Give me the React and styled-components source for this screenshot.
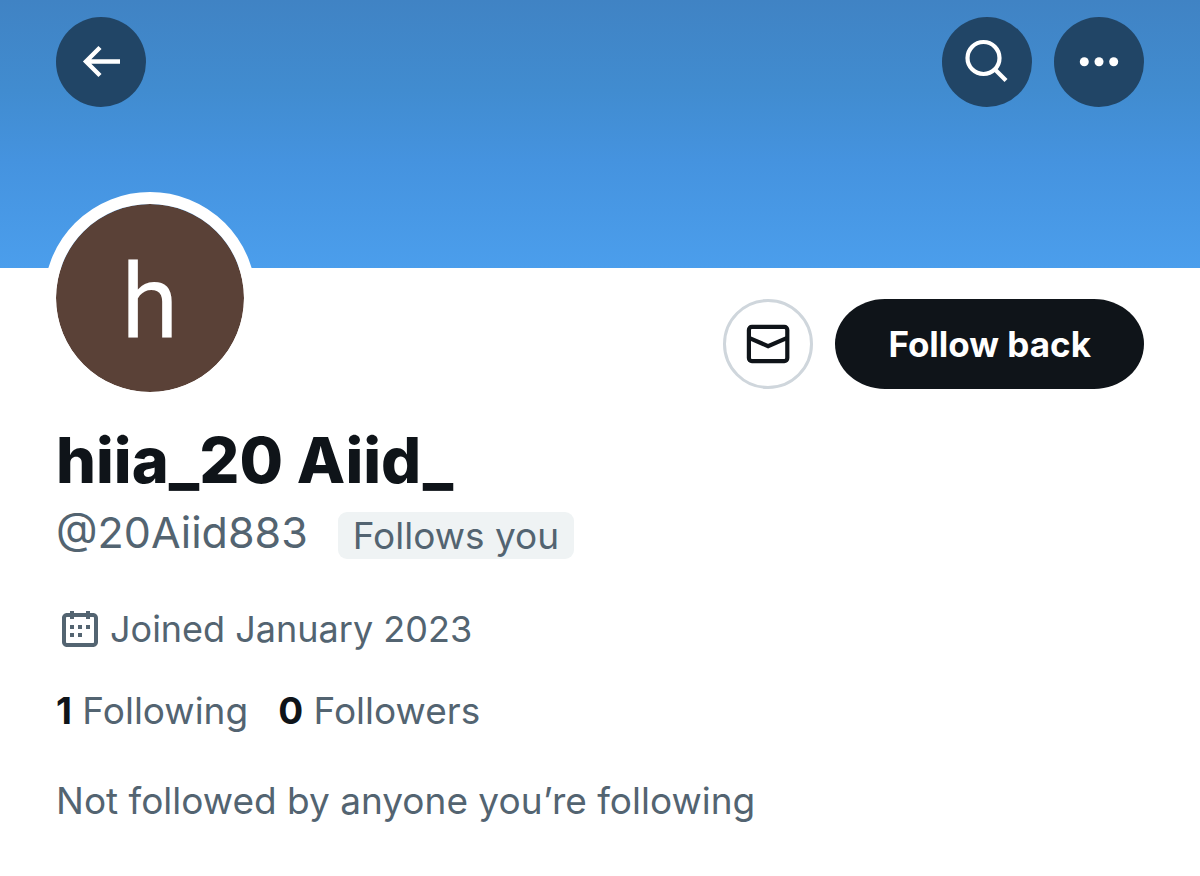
import React from 'react'
import styled, { createGlobalStyle } from 'styled-components'

const GlobalStyle = createGlobalStyle`
* {
box-sizing: border-box;
}
body {
margin: 0;
background: #ffffff;
color: #0f1419;
font-family: Inter, 'Liberation Sans', sans-serif;
}
`

const Banner = styled.header`
display: flex;
align-items: flex-start;
gap: 22px;
height: 268px;
padding: 17px 56px;
background: linear-gradient(180deg, #4083c4 0%, #418cd0 34%, #4593df 60%, #4b9eec 100%);
`

const CircleButton = styled.button`
display: flex;
align-items: center;
justify-content: center;
flex-shrink: 0;
width: 90px;
height: 90px;
padding: 0;
border: ${(props) => (props.$outlined ? '3px solid #cfd6dc' : 'none')};
border-radius: 50%;
background: ${(props) => (props.$outlined ? '#ffffff' : '#214566')};
color: ${(props) => (props.$outlined ? '#0f1419' : '#ffffff')};
cursor: pointer;
`

const BackButton = styled(CircleButton)`
margin-right: auto;
`

const Profile = styled.main`
padding: 0 56px 51px;
`

const TopRow = styled.div`
display: flex;
align-items: flex-start;
justify-content: space-between;
`

const Avatar = styled.div`
display: flex;
align-items: center;
justify-content: center;
width: 212px;
height: 212px;
margin: -76px 0 0 -12px;
padding-top: 10px;
border: 12px solid #ffffff;
border-radius: 50%;
background: #5a4137;
background-clip: padding-box;
color: #ffffff;
font-family: Roboto, sans-serif;
font-size: 104px;
line-height: 104px;
`

const Actions = styled.div`
display: flex;
gap: 22px;
padding-top: 31px;
`

const FollowButton = styled.button`
height: 90px;
padding: 0 53px;
border: none;
border-radius: 50px / 45px;
background: #0f1419;
color: #ffffff;
font-family: inherit;
font-size: 35px;
font-weight: 700;
cursor: pointer;
`

const Name = styled.h1`
margin: 20px 0 0;
font-size: 63px;
font-weight: 800;
line-height: 72px;
`

const HandleRow = styled.div`
display: flex;
align-items: flex-end;
gap: 30px;
margin-top: 9px;
color: #536471;
`

const Handle = styled.span`
font-size: 43px;
line-height: 54px;
`

const Chip = styled.span`
padding: 0 15px;
border-radius: 9px;
background: #eff3f4;
font-size: 37px;
line-height: 47px;
`

const Line = styled.p`
display: flex;
align-items: center;
margin: ${(props) => props.$top}px 0 0;
color: #536471;
font-size: 37px;
line-height: 48px;
`

const Joined = styled.span`
padding-left: 6px;
font-size: 36px;
`

const Stat = styled.a`
margin-right: 30px;
color: inherit;
text-decoration: none;
`

const Count = styled.strong`
color: #0f1419;
font-weight: 700;
`

const BackIcon = () => (
    <svg width="40" height="40" viewBox="0 0 40 40" fill="none" stroke="currentColor" strokeWidth="4.4" aria-hidden="true">
        <path d="M39 19.5H5M19 5.5L5 19.5l14 14" />
    </svg>
)

const SearchIcon = () => (
    <svg width="48" height="48" viewBox="0 0 48 48" fill="none" stroke="currentColor" strokeWidth="4.2" aria-hidden="true">
        <circle cx="20.5" cy="20" r="16" />
        <path d="M31.5 31L43 42.5" />
    </svg>
)

const MoreIcon = () => (
    <svg width="48" height="48" viewBox="0 0 48 48" fill="currentColor" aria-hidden="true">
        <circle cx="9.3" cy="23.8" r="4.5" />
        <circle cx="24" cy="23.8" r="4.5" />
        <circle cx="38.7" cy="23.8" r="4.5" />
    </svg>
)

const MailIcon = () => (
    <svg width="44" height="40" viewBox="0 0 44 40" fill="none" stroke="currentColor" strokeWidth="4.2" aria-hidden="true">
        <rect x="2.9" y="2.9" width="38.4" height="34.2" rx="3" />
        <path d="M3 13.8l19.1 8.4 19.1-8.4" />
    </svg>
)

const CalendarIcon = () => (
    <svg width="48" height="48" viewBox="0 0 24 24" fill="currentColor" aria-hidden="true">
        <path d="M7 4V3h2v1h6V3h2v1h1.5C19.89 4 21 5.12 21 6.5v12c0 1.38-1.11 2.5-2.5 2.5h-13C4.12 21 3 19.88 3 18.5v-12C3 5.12 4.12 4 5.5 4H7zm0 2H5.5c-.27 0-.5.22-.5.5v12c0 .28.23.5.5.5h13c.28 0 .5-.22.5-.5v-12c0-.28-.22-.5-.5-.5H17v1h-2V6H9v1H7V6zm0 6h2v-2H7v2zm0 4h2v-2H7v2zm4-4h2v-2h-2v2zm0 4h2v-2h-2v2zm4-4h2v-2h-2v2z" />
    </svg>
)

const App = () => {
    return (
        <>
            <GlobalStyle />
            <Banner>
                <BackButton aria-label="Back"><BackIcon /></BackButton>
                <CircleButton aria-label="Search"><SearchIcon /></CircleButton>
                <CircleButton aria-label="More"><MoreIcon /></CircleButton>
            </Banner>
            <Profile>
                <TopRow>
                    <Avatar>h</Avatar>
                    <Actions>
                        <CircleButton $outlined aria-label="Message"><MailIcon /></CircleButton>
                        <FollowButton>Follow back</FollowButton>
                    </Actions>
                </TopRow>
                <Name>hiia_20 Aiid_</Name>
                <HandleRow>
                    <Handle>@20Aiid883</Handle>
                    <Chip>Follows you</Chip>
                </HandleRow>
                <Line $top={46}>
                    <CalendarIcon />
                    <Joined>Joined January 2023</Joined>
                </Line>
                <Line $top={34}>
                    <Stat href="#following"><Count>1</Count> Following</Stat>
                    <Stat href="#followers"><Count>0</Count> Followers</Stat>
                </Line>
                <Line $top={42}>Not followed by anyone you’re following</Line>
            </Profile>
        </>
    )
}

export default App
